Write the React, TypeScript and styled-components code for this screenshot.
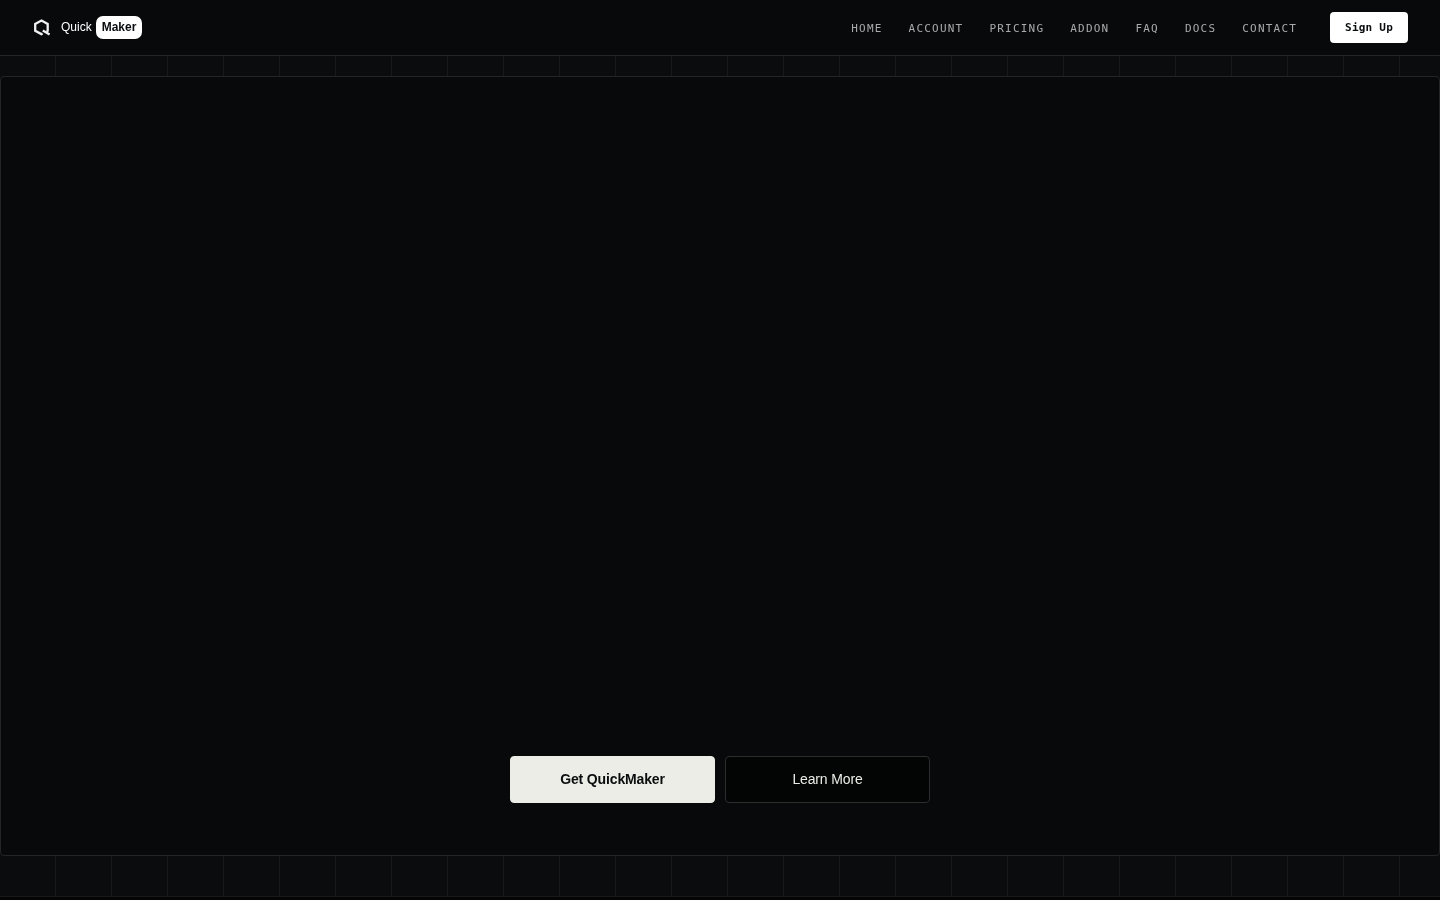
import React from "react";
import styled, { createGlobalStyle } from "styled-components";

const GlobalStyle = createGlobalStyle`
  *, *::before, *::after { box-sizing: border-box; }
  body {
    margin: 0;
    background: #08090b;
    color: #ffffff;
    font-family: "Liberation Sans", Arial, sans-serif;
  }
`;

const Page = styled.div`
  display: flex;
  flex-direction: column;
  height: 100vh;
  overflow: hidden;
`;

const Header = styled.header`
  display: flex;
  align-items: center;
  justify-content: space-between;
  flex-shrink: 0;
  height: 56px;
  padding: 0 32px;
  background: rgba(8, 9, 11, 0.96);
  border-bottom: 1px solid #242527;
  backdrop-filter: blur(12px);
`;

const Brand = styled.a`
  display: flex;
  align-items: center;
  color: #ffffff;
  font-size: 12px;
  line-height: 15px;
  text-decoration: none;
`;

const Mark = styled.svg`
  width: 20px;
  height: 20px;
  margin-right: 9px;
`;

const BrandTag = styled.span`
  margin-left: 4px;
  padding: 4px 6px;
  border-radius: 7px;
  background: #ffffff;
  color: #0b0c0e;
  font-weight: 700;
`;

const Nav = styled.nav`
  display: flex;
  align-items: center;
  gap: 26px;
  font-family: "DejaVu Sans Mono", monospace;
  font-size: 11px;
`;

const NavLink = styled.a`
  padding-top: 2px;
  color: #a9aaac;
  letter-spacing: 0.11em;
  line-height: 16px;
  text-decoration: none;
`;

const SignUp = styled.button`
  height: 31px;
  margin-left: 7px;
  padding: 0 15px;
  border: 0;
  border-radius: 4px;
  background: #ffffff;
  color: #0b0c0e;
  font: inherit;
  font-weight: 700;
  letter-spacing: 0.02em;
`;

const Backdrop = styled.main`
  display: flex;
  flex: 1;
  flex-direction: column;
  padding: 20px 0 40px;
  background: repeating-linear-gradient(to right, transparent 0 55px, #18191b 55px 56px) #0b0c0e;
`;

const Hero = styled.section`
  display: flex;
  flex: 1;
  align-items: flex-end;
  justify-content: center;
  gap: 10px;
  padding-bottom: 52px;
  border: 1px solid #242527;
  border-radius: 4px;
  background: #08090b;
`;

const Action = styled.button<{ $primary?: boolean }>`
  width: 205px;
  height: 47px;
  padding: 0 0 2px;
  border: 1px solid ${(p) => (p.$primary ? "#ebede6" : "#2c2d2f")};
  border-radius: 4px;
  background: ${(p) => (p.$primary ? "#ebede6" : "#030404")};
  color: ${(p) => (p.$primary ? "#0b0c0e" : "#ebede6")};
  font-family: inherit;
  font-size: 14px;
  font-weight: ${(p) => (p.$primary ? 700 : 400)};
  letter-spacing: -0.01em;
  will-change: transform;
`;

const NextSection = styled.div`
  flex-shrink: 0;
  height: 4px;
  border-top: 1px solid #18191b;
  background: #050506;
`;

const links = ["HOME", "ACCOUNT", "PRICING", "ADDON", "FAQ", "DOCS", "CONTACT"];

export default function App() {
  return (
    <Page>
      <GlobalStyle />
      <Header>
        <Brand href="#home">
          <Mark viewBox="0 0 20 20" fill="none" aria-hidden="true">
            <path
              d="M10.6 15.4 9.4 16.1 3.2 12.7V6L9.5 2.6 15.7 6V12.8L14.9 13.6M10.8 12.4 17.6 16.6"
              stroke="#f0f0f0"
              strokeWidth="2.3"
            />
          </Mark>
          Quick
          <BrandTag>Maker</BrandTag>
        </Brand>
        <Nav>
          {links.map((name) => (
            <NavLink key={name} href={"#" + name.toLowerCase()}>
              {name}
            </NavLink>
          ))}
          <SignUp type="button">Sign Up</SignUp>
        </Nav>
      </Header>
      <Backdrop>
        <Hero>
          <Action type="button" $primary>
            Get QuickMaker
          </Action>
          <Action type="button">Learn More</Action>
        </Hero>
      </Backdrop>
      <NextSection />
    </Page>
  );
}
